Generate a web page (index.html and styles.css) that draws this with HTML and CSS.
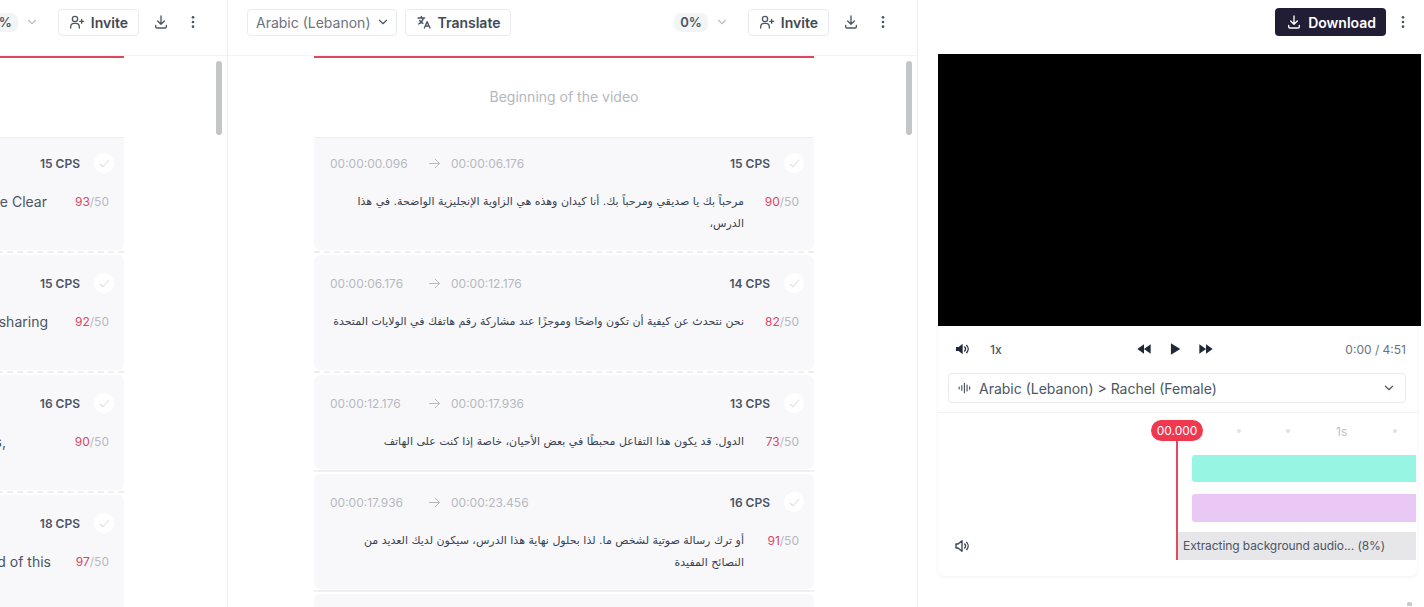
FILE: index.html
```html
<!DOCTYPE html>
<html lang="en">
<head>
  <meta charset="UTF-8" />
  <meta name="viewport" content="width=device-width, initial-scale=1.0" />
  <title>Subtitle Editor</title>
  <link rel="stylesheet" href="styles.css">
</head>
<body>
  <svg class="sprite" xmlns="http://www.w3.org/2000/svg">
    <symbol id="i-chev" viewBox="0 0 24 24"><path d="M6 9l6 6 6-6" fill="none" stroke="currentColor" stroke-width="2" stroke-linecap="round" stroke-linejoin="round"/></symbol>
    <symbol id="i-invite" viewBox="0 0 24 24"><g fill="none" stroke="currentColor" stroke-width="2" stroke-linecap="round" stroke-linejoin="round"><circle cx="9" cy="7.5" r="4"/><path d="M2.5 21v-2a5 5 0 0 1 5-5h3a5 5 0 0 1 5 5v2"/><path d="M19 8v6M16 11h6"/></g></symbol>
    <symbol id="i-download" viewBox="0 0 24 24"><g fill="none" stroke="currentColor" stroke-width="2" stroke-linecap="round" stroke-linejoin="round"><path d="M12 3v12M7 10.5l5 5 5-5"/><path d="M4 17v2a2 2 0 0 0 2 2h12a2 2 0 0 0 2-2v-2"/></g></symbol>
    <symbol id="i-dots" viewBox="0 0 24 24"><circle cx="12" cy="5" r="2" fill="currentColor"/><circle cx="12" cy="12" r="2" fill="currentColor"/><circle cx="12" cy="19" r="2" fill="currentColor"/></symbol>
    <symbol id="i-translate" viewBox="0 0 24 24"><g fill="none" stroke="currentColor" stroke-width="2" stroke-linecap="round" stroke-linejoin="round"><path d="M3 6h10M8 3.5V6M11 6c-.8 4-3.5 7-7 9M5.5 9.5c1 2 3 3.6 5 4.5"/><path d="M12.5 21l4.2-9.5L21 21M14 18h5.5"/></g></symbol>
    <symbol id="i-arrow" viewBox="0 0 24 24"><path d="M4 12h16M13 5l7 7-7 7" fill="none" stroke="currentColor" stroke-width="1.6" stroke-linecap="round" stroke-linejoin="round"/></symbol>
    <symbol id="i-check" viewBox="0 0 24 24"><path d="M4 13l5 5L20 6" fill="none" stroke="currentColor" stroke-width="2" stroke-linecap="round" stroke-linejoin="round"/></symbol>
  </svg>

  <div class="app">
    <!-- source language, scrolled off to the left -->
    <section class="pane pane-clipped">
      <div class="pane-inner">
        <header class="pane-head">
          <div class="head-right">
            <span class="pct">0%</span>
            <svg class="icon chev-light"><use href="#i-chev"/></svg>
            <button class="btn"><svg class="icon"><use href="#i-invite"/></svg>Invite</button>
            <svg class="icon tool"><use href="#i-download"/></svg>
            <svg class="icon tool"><use href="#i-dots"/></svg>
          </div>
        </header>
        <div class="scroll">
          <div class="thumb"></div>
          <div class="list">
            <div class="begin"></div>
            <div class="seg seg-first">
              <div class="seg-top"><span class="cps">15 CPS</span><span class="tick"><svg class="icon"><use href="#i-check"/></svg></span></div>
              <div class="seg-body"><p class="seg-text end-47">this is the Clear</p><span class="count"><b>93</b>/50</span></div>
            </div>
            <div class="sep"></div>
            <div class="seg">
              <div class="seg-top"><span class="cps">15 CPS</span><span class="tick"><svg class="icon"><use href="#i-check"/></svg></span></div>
              <div class="seg-body"><p class="seg-text end-48">when sharing</p><span class="count"><b>92</b>/50</span></div>
            </div>
            <div class="sep"></div>
            <div class="seg">
              <div class="seg-top"><span class="cps">16 CPS</span><span class="tick"><svg class="icon"><use href="#i-check"/></svg></span></div>
              <div class="seg-body"><p class="seg-text end-6">States,</p><span class="count"><b>90</b>/50</span></div>
            </div>
            <div class="sep"></div>
            <div class="seg">
              <div class="seg-top"><span class="cps">18 CPS</span><span class="tick"><svg class="icon"><use href="#i-check"/></svg></span></div>
              <div class="seg-body"><p class="seg-text end-51">by the end of this</p><span class="count"><b>97</b>/50</span></div>
            </div>
          </div>
        </div>
      </div>
    </section>

    <!-- translation -->
    <section class="pane pane-mid">
      <div class="pane-inner">
        <header class="pane-head">
          <button class="btn btn-select">Arabic (Lebanon)<svg class="icon icon-sm"><use href="#i-chev"/></svg></button>
          <button class="btn"><svg class="icon"><use href="#i-translate"/></svg>Translate</button>
          <div class="head-right">
            <span class="pct">0%</span>
            <svg class="icon chev-light"><use href="#i-chev"/></svg>
            <button class="btn"><svg class="icon"><use href="#i-invite"/></svg>Invite</button>
            <svg class="icon tool"><use href="#i-download"/></svg>
            <svg class="icon tool"><use href="#i-dots"/></svg>
          </div>
        </header>
        <div class="scroll">
          <div class="thumb"></div>
          <div class="list">
            <div class="begin">Beginning of the video</div>
            <div class="seg seg-first">
              <div class="seg-top"><span class="time">00:00:00.096</span><svg class="icon arrow"><use href="#i-arrow"/></svg><span class="time">00:00:06.176</span><span class="cps">15 CPS</span><span class="tick"><svg class="icon"><use href="#i-check"/></svg></span></div>
              <div class="seg-body"><p class="seg-text" lang="ar" dir="rtl">مرحباً بك يا صديقي ومرحباً بك. أنا كيدان وهذه هي الزاوية الإنجليزية الواضحة. في هذا الدرس،</p><span class="count"><b>90</b>/50</span></div>
            </div>
            <div class="sep"></div>
            <div class="seg">
              <div class="seg-top"><span class="time">00:00:06.176</span><svg class="icon arrow"><use href="#i-arrow"/></svg><span class="time">00:00:12.176</span><span class="cps">14 CPS</span><span class="tick"><svg class="icon"><use href="#i-check"/></svg></span></div>
              <div class="seg-body"><p class="seg-text" lang="ar" dir="rtl">نحن نتحدث عن كيفية أن تكون واضحًا وموجزًا عند مشاركة رقم هاتفك في الولايات المتحدة</p><span class="count"><b>82</b>/50</span></div>
            </div>
            <div class="sep"></div>
            <div class="seg seg-short">
              <div class="seg-top"><span class="time">00:00:12.176</span><svg class="icon arrow"><use href="#i-arrow"/></svg><span class="time">00:00:17.936</span><span class="cps">13 CPS</span><span class="tick"><svg class="icon"><use href="#i-check"/></svg></span></div>
              <div class="seg-body"><p class="seg-text" lang="ar" dir="rtl">الدول. قد يكون هذا التفاعل محبطًا في بعض الأحيان، خاصة إذا كنت على الهاتف</p><span class="count"><b>73</b>/50</span></div>
            </div>
            <div class="sep sep-solid"></div>
            <div class="seg">
              <div class="seg-top"><span class="time">00:00:17.936</span><svg class="icon arrow"><use href="#i-arrow"/></svg><span class="time">00:00:23.456</span><span class="cps">16 CPS</span><span class="tick"><svg class="icon"><use href="#i-check"/></svg></span></div>
              <div class="seg-body"><p class="seg-text" lang="ar" dir="rtl">أو ترك رسالة صوتية لشخص ما. لذا بحلول نهاية هذا الدرس، سيكون لديك العديد من النصائح المفيدة</p><span class="count"><b>91</b>/50</span></div>
            </div>
            <div class="sep sep-solid"></div>
            <div class="seg"></div>
          </div>
        </div>
      </div>
    </section>

    <!-- preview -->
    <section class="preview">
      <header class="preview-head">
        <button class="btn-download"><svg class="icon"><use href="#i-download"/></svg>Download</button>
        <svg class="icon tool"><use href="#i-dots"/></svg>
      </header>
      <div class="video"></div>
      <div class="card">
        <div class="controls">
          <div class="controls-left">
            <svg class="icon" viewBox="0 0 24 24"><path d="M3 9h4l6-5v16l-6-5H3z" fill="#1f2937"/><path d="M16 9a4 4 0 0 1 0 6M19 6.5a8 8 0 0 1 0 11" fill="none" stroke="#1f2937" stroke-width="2" stroke-linecap="round"/></svg>
            <span class="speed">1x</span>
          </div>
          <div class="controls-mid">
            <svg class="icon" viewBox="0 0 24 24"><path d="M12 5v14L2 12zM22 5v14l-10-7z" fill="#1f2937"/></svg>
            <svg class="icon icon-play" viewBox="0 0 24 24"><path d="M5 2l16 10L5 22z" fill="#1f2937"/></svg>
            <svg class="icon" viewBox="0 0 24 24"><path d="M2 5l10 7-10 7zM12 5l10 7-10 7z" fill="#1f2937"/></svg>
          </div>
          <span class="clock">0:00 / 4:51</span>
        </div>
        <div class="voice">
          <svg class="icon icon-sm" viewBox="0 0 24 24"><path d="M2 10.5v3M6.5 8v8M11 4v16M15.5 7v10M20 10v4" fill="none" stroke="#4b5563" stroke-width="2" stroke-linecap="round"/></svg>
          <span class="voice-name">Arabic (Lebanon) &gt; Rachel (Female)</span>
          <svg class="icon icon-sm"><use href="#i-chev"/></svg>
        </div>
        <div class="timeline">
          <div class="playhead"><span class="playhead-label">00.000</span></div>
          <div class="ruler"><i></i><i></i><span>1s</span><i></i></div>
          <div class="track track-teal"></div>
          <div class="track track-purple"></div>
          <div class="audio-row">
            <svg class="icon" viewBox="0 0 24 24"><path d="M3 9h3l6-5v16l-6-5H3z" fill="none" stroke="#374151" stroke-width="2" stroke-linejoin="round"/><path d="M16 9a4 4 0 0 1 0 6M19 6.5a8 8 0 0 1 0 11" fill="none" stroke="#374151" stroke-width="2" stroke-linecap="round"/></svg>
            <div class="audio-status">Extracting background audio... (8%)</div>
          </div>
        </div>
      </div>
      <span class="scroll-arrow"></span>
    </section>
  </div>
</body>
</html>
```

FILE: styles.css
```css
* {
  box-sizing: border-box;
}
body {
  margin: 0;
  height: 607px;
  overflow: hidden;
  background: #fff;
  color: #374151;
  font-family: Inter, "DejaVu Sans", sans-serif;
  font-size: 14px;
}
p {
  margin: 0;
}
.sprite {
  display: none;
}
.app {
  display: flex;
  height: 607px;
}
.icon {
  display: block;
  flex-shrink: 0;
  width: 16px;
  height: 16px;
}
.icon-sm {
  width: 14px;
  height: 14px;
}

/* subtitle panes */
.pane {
  display: flex;
  justify-content: flex-end;
  flex-shrink: 0;
  overflow: hidden;
  border-right: 1px solid #eceef1;
}
.pane-clipped {
  width: 228px;
}
.pane-mid {
  width: 690px;
}
.pane-inner {
  flex-shrink: 0;
  width: 689px;
  height: 607px;
}
.pane-head {
  display: flex;
  align-items: center;
  gap: 8px;
  height: 56px;
  padding: 0 26px 11px 19px;
  border-bottom: 1px solid #f3f4f6;
}
.head-right {
  display: flex;
  align-items: center;
  margin-left: auto;
}
.btn {
  display: flex;
  align-items: center;
  gap: 6px;
  height: 27px;
  padding: 0 10px;
  background: #fff;
  border: 1px solid #e9ebee;
  border-radius: 4px;
  color: #414955;
  font-family: inherit;
  font-size: 14px;
  font-weight: 600;
}
.btn .icon {
  color: #4b5563;
}
.btn-select {
  padding: 0 6px 0 8px;
  gap: 5px;
  color: #6b7280;
  font-weight: 400;
}
.pct {
  margin-right: 7px;
  padding: 0 6px;
  height: 19px;
  background: #f3f4f6;
  border-radius: 7px;
  color: #4b5563;
  font-size: 13px;
  font-weight: 600;
  line-height: 19px;
}
.chev-light {
  width: 14px;
  height: 14px;
  margin-right: 19px;
  color: #b8bcc4;
}
.tool {
  width: 16px;
  height: 16px;
  margin-left: 14px;
  color: #4b5563;
}
.head-right .tool:last-child {
  margin-left: 16px;
}
.scroll {
  position: relative;
}
.thumb {
  position: absolute;
  top: 5px;
  right: 5px;
  width: 6px;
  height: 74px;
  background: #c4c5c7;
  border-radius: 3px;
}
.list {
  width: 500px;
  margin-left: 86px;
  border-top: 2px solid #e0475c;
}
.begin {
  height: 79px;
  padding-top: 30px;
  color: #b4b7bd;
  text-align: center;
  line-height: 18px;
}
.seg {
  height: 115px;
  padding: 20px 15px 0 16px;
  background: #f8f8fb;
  border-radius: 6px;
}
.seg-first {
  height: 113px;
  padding-top: 17px;
  border-top: 1px solid #eceef1;
  border-radius: 0 0 6px 6px;
}
.seg-short {
  height: 94px;
}
.sep {
  height: 5px;
  padding-top: 1px;
}
.sep::before {
  content: "";
  display: block;
  border-top: 2px dashed #eceef0;
}
.sep-solid::before {
  border-top: 2px solid #eff0f2;
}
.seg-top {
  display: flex;
  align-items: center;
  height: 16px;
}
.time {
  color: #b6b9bf;
  font-size: 12px;
}
.time:first-child {
  width: 78px;
}
.arrow {
  width: 15px;
  height: 15px;
  margin: 0 9px 0 19px;
  color: #b6b9bf;
}
.cps {
  margin-left: auto;
  color: #4b5563;
  font-size: 12px;
  font-weight: 600;
}
.tick {
  display: flex;
  align-items: center;
  justify-content: center;
  width: 20px;
  height: 20px;
  margin: 0 -5px 0 14px;
  background: #fff;
  border-radius: 50%;
  color: #dcdee2;
}
.tick .icon {
  width: 13px;
  height: 13px;
}
.seg-body {
  display: flex;
  align-items: flex-start;
  margin-top: 20px;
}
.seg-text {
  flex: 1;
  margin-right: 55px;
  color: #4b5563;
  line-height: 22px;
  text-align: right;
}
.seg-text[lang="ar"] {
  color: #374151;
  font-family: "DejaVu Sans", sans-serif;
  font-size: 11px;
  text-align: start;
}
.end-47 {
  padding-right: 7px;
}
.end-48 {
  padding-right: 6px;
}
.end-6 {
  padding-right: 48px;
}
.end-51 {
  padding-right: 3px;
}
.count {
  position: absolute;
  right: 118px;
  color: #b6b9bf;
  font-size: 12px;
  line-height: 22px;
}
.count b {
  color: #d9475f;
  font-weight: 400;
}

/* preview side */
.preview {
  position: relative;
  flex: 1;
  min-width: 0;
  padding-left: 20px;
}
.preview-head {
  display: flex;
  align-items: center;
  justify-content: flex-end;
  height: 54px;
  padding: 0 13px 10px 0;
}
.preview-head .tool {
  margin-left: 9px;
}
.btn-download {
  display: flex;
  align-items: center;
  gap: 6px;
  height: 28px;
  padding: 0 10px 0 11px;
  background: #211d35;
  border: none;
  border-radius: 4px;
  color: #fff;
  font-family: inherit;
  font-size: 14px;
  font-weight: 600;
}
.video {
  width: 483px;
  height: 272px;
  background: #000;
}
.card {
  width: 479px;
  height: 250px;
  border-radius: 0 0 6px 6px;
  box-shadow: 0 1px 4px rgba(0, 0, 0, 0.06);
}
.controls {
  display: flex;
  align-items: center;
  height: 46px;
  padding: 0 11px 0 16px;
}
.controls-left {
  display: flex;
  align-items: center;
  gap: 20px;
  width: 182px;
}
.speed {
  color: #4b5563;
  font-size: 12px;
  font-weight: 500;
}
.controls-mid {
  display: flex;
  align-items: center;
  gap: 16px;
}
.icon-play {
  width: 14px;
  height: 14px;
}
.clock {
  margin-left: auto;
  color: #6b7280;
  font-size: 12px;
}
.voice {
  display: flex;
  align-items: center;
  gap: 7px;
  width: 458px;
  height: 30px;
  margin: 1px 0 0 10px;
  padding: 0 9px;
  border: 1px solid #e9ebee;
  border-radius: 4px;
  color: #4b5563;
}
.voice-name {
  flex: 1;
}
.timeline {
  position: relative;
  margin-top: 9px;
  padding-top: 8px;
  border-top: 1px solid #f0f1f3;
}
.playhead {
  position: absolute;
  top: 7px;
  left: 238px;
  width: 2px;
  height: 140px;
  background: #e5485f;
}
.playhead-label {
  position: absolute;
  top: 0;
  left: -25px;
  width: 52px;
  height: 21px;
  background: #f0394f;
  border-radius: 11px;
  color: #fff;
  font-size: 12px;
  line-height: 21px;
  text-align: center;
}
.ruler {
  display: flex;
  align-items: center;
  height: 21px;
  padding: 0 0 1px 299px;
  overflow: hidden;
  color: #bfc2c8;
  font-size: 12px;
}
.ruler i {
  flex-shrink: 0;
  width: 4px;
  height: 4px;
  margin-right: 45px;
  background: #dfe1e5;
  border-radius: 50%;
}
.ruler span {
  margin: 0 46px 0 1px;
}
.track {
  height: 28px;
  margin: 0 1px 0 254px;
  border-radius: 3px 0 0 3px;
}
.track-teal {
  margin-top: 13px;
  height: 27px;
  background: #97f5e3;
}
.track-purple {
  margin-top: 12px;
  background: #e9c8f6;
}
.audio-row {
  display: flex;
  align-items: center;
  margin-top: 10px;
  padding-left: 16px;
}
.audio-status {
  width: 238px;
  height: 28px;
  margin-left: 208px;
  padding-left: 5px;
  background: #e7e7ea;
  color: #4b5563;
  font-size: 12px;
  letter-spacing: -0.08px;
  line-height: 28px;
  white-space: nowrap;
}
.scroll-arrow {
  position: absolute;
  right: 12px;
  bottom: 1px;
  width: 5px;
  height: 4px;
  background: #c9cacc;
  border-radius: 2px 2px 0 0;
}
```
